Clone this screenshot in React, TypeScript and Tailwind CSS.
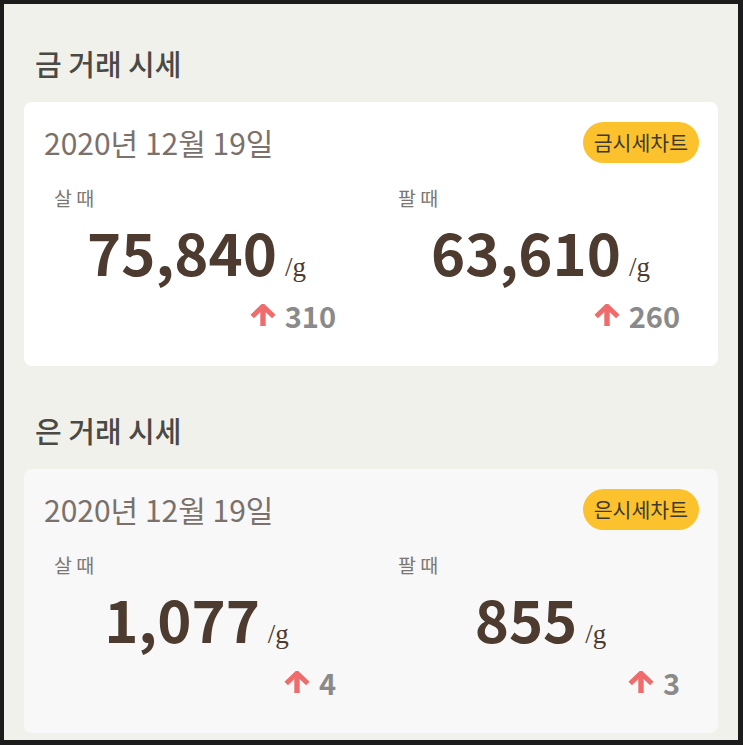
import React from "react";

const sans = { fontFamily: '"Noto Sans CJK KR", "Noto Sans", sans-serif' };

function UpArrow() {
  return (
    <svg width="26" height="22" viewBox="0 0 26 22" className="shrink-0">
      <path d="M2.2 12.5 L13 2.2 L23.8 12.5" fill="none" stroke="#f06b6b" strokeWidth="5" strokeLinejoin="miter" />
      <path d="M13 4 V22" fill="none" stroke="#f06b6b" strokeWidth="5.4" />
    </svg>
  );
}

type Col = { label: string; value: string; diff: string };

function Column({ c }: { c: Col }) {
  return (
    <div className="flex flex-col">
      <div className="text-[19.5px] leading-[24px] text-[#7a7773]">{c.label}</div>
      <div className="mt-[11px] flex items-baseline justify-center gap-[8px]">
        <span className="text-[58px] leading-[60px] font-bold text-[#4d3b2f]">{c.value}</span>
        <span
          className="text-[27px] leading-[26px] text-[#4d3b2f]"
          style={{ fontFamily: '"Liberation Serif", serif' }}
        >
          /g
        </span>
      </div>
      <div className="mt-[18px] pr-[3px] flex items-center justify-end gap-[9px]">
        <UpArrow />
        <span className="text-[29px] leading-[32px] font-bold text-[#8a8a8a]">{c.diff}</span>
      </div>
    </div>
  );
}

function Section({
  title,
  badge,
  bg,
  cols,
}: {
  title: string;
  badge: string;
  bg: string;
  cols: Col[];
}) {
  return (
    <div>
      <div className="pl-[11px] text-[29px] leading-[36px] font-medium text-[#4a4944]">{title}</div>
      <div className={`mt-[21px] rounded-[8px] ${bg} pl-[20px] pr-[19px] pt-[20px] pb-[35px]`}>
        <div className="flex items-center justify-between h-[40px]">
          <span className="text-[30px] leading-[36px] text-[#7a716b]">2020년 12월 19일</span>
          <span className="h-[41px] px-[11px] rounded-full bg-[#fcc22d] text-[20.5px] leading-[41px] text-[#3d3a33]">
            {badge}
          </span>
        </div>
        <div className="mt-[24px] ml-[10px] mr-[16px] grid grid-cols-2 gap-x-[59px]">
          {cols.map((c) => (
            <Column key={c.label} c={c} />
          ))}
        </div>
      </div>
    </div>
  );
}

export default function App() {
  return (
    <div className="w-[743px] h-[745px] bg-[#1c1c1c] pt-[4px] pl-[4px] pr-[5px] pb-[5px]" style={sans}>
      <div className="h-full bg-[#f1f1ec] px-[20px] pt-[41px] overflow-hidden">
        <Section
          title="금 거래 시세"
          badge="금시세차트"
          bg="bg-white"
          cols={[
            { label: "살 때", value: "75,840", diff: "310" },
            { label: "팔 때", value: "63,610", diff: "260" },
          ]}
        />
        <div className="mt-[46px]">
          <Section
            title="은 거래 시세"
            badge="은시세차트"
            bg="bg-[#f8f8f8]"
            cols={[
              { label: "살 때", value: "1,077", diff: "4" },
              { label: "팔 때", value: "855", diff: "3" },
            ]}
          />
        </div>
      </div>
    </div>
  );
}
